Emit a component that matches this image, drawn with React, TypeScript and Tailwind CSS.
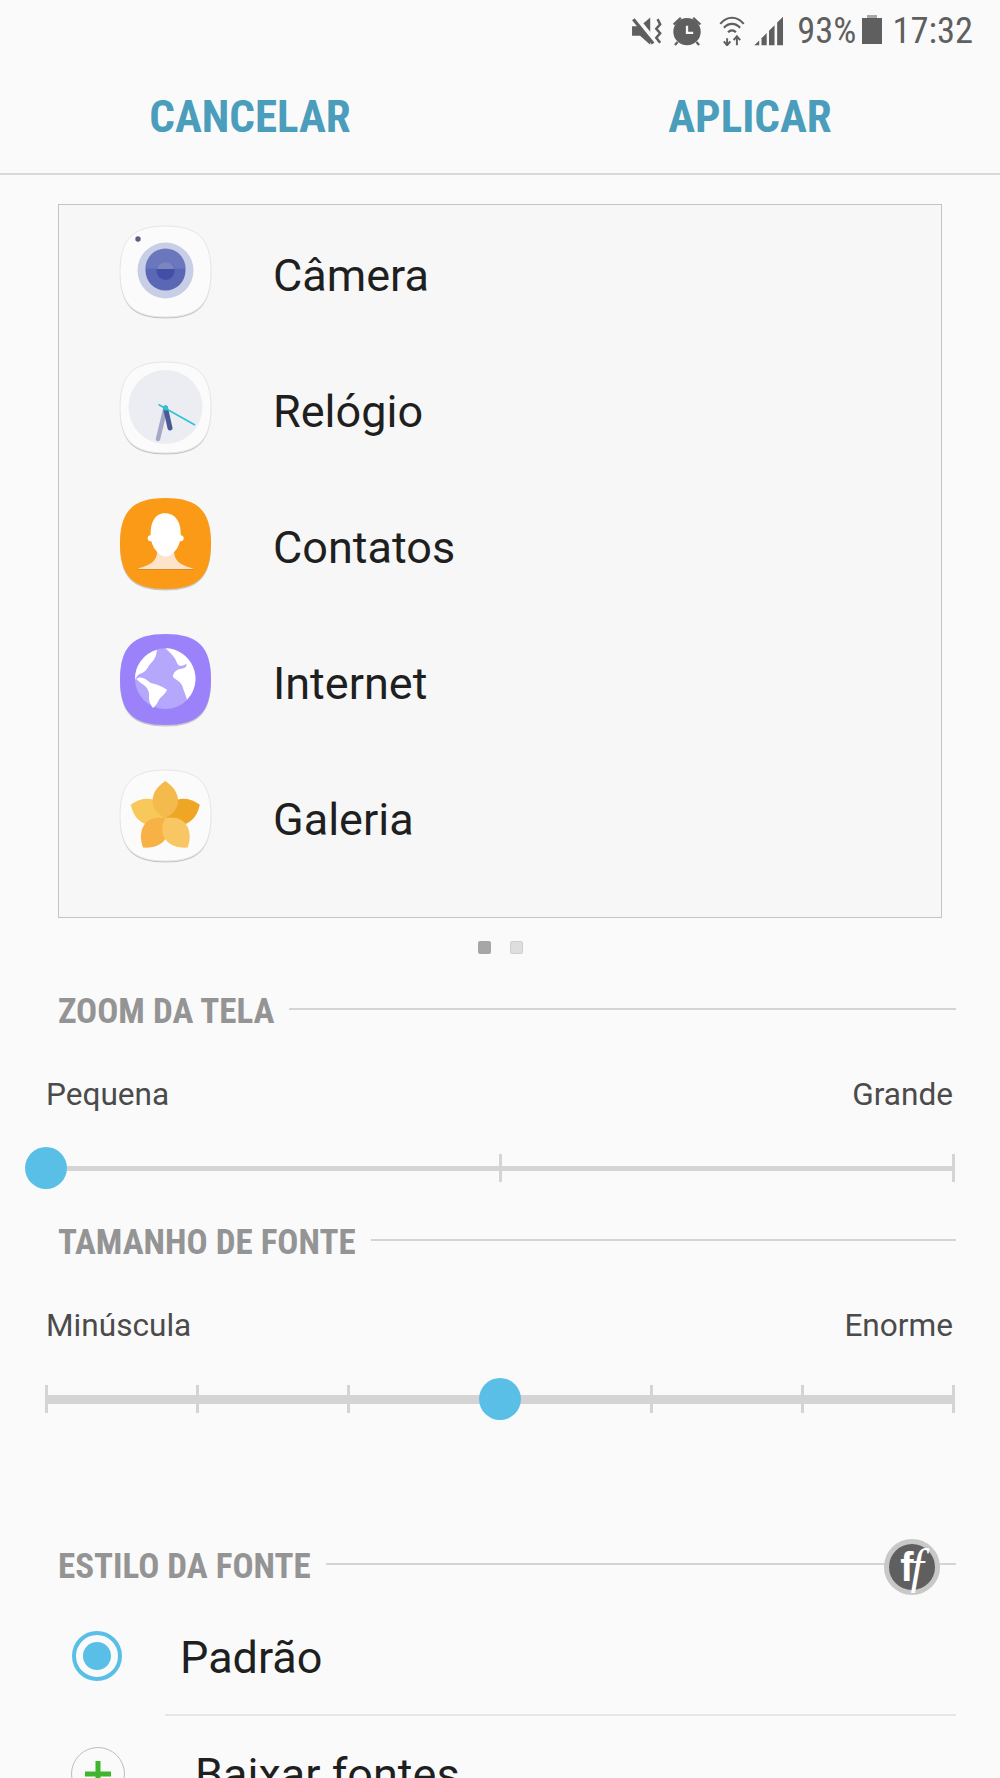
import React from "react";

const SQUIRCLE = "M46.5 1C79 1 92 14 92 46.5C92 79 79 92 46.5 92C14 92 1 79 1 46.5C1 14 14 1 46.5 1Z";

const IconBase = ({ fill, children }: { fill: string; children: React.ReactNode }) => (
  <svg width="93" height="93" viewBox="0 0 93 93" className="shrink-0 overflow-visible">
    <path d={SQUIRCLE} fill={fill === "#fbfbfb" ? "#c4c4c4" : "#00000030"} transform="translate(0 1.5)" />
    <path d={SQUIRCLE} fill={fill} stroke={fill === "#fbfbfb" ? "#e6e6e6" : "none"} />
    {children}
  </svg>
);

const CameraIcon = () => (
  <IconBase fill="#fbfbfb">
    <circle cx="19" cy="14" r="2.7" fill="#5c5c85" />
    <circle cx="46.5" cy="45.5" r="28" fill="#c8cee6" />
    <circle cx="46.5" cy="45.5" r="20" fill="#5a67b5" />
    <path d="M26.5 43.5a20 20 0 0 1 40 0Z" fill="#6a77bd" />
    <circle cx="46.5" cy="46" r="9" fill="#4150a6" />
    <path d="M37.7 44a9 9 0 0 1 17.6 0Z" fill="#7a86bd" />
  </IconBase>
);

const ClockIcon = () => (
  <IconBase fill="#fbfbfb">
    <circle cx="46.5" cy="46" r="37" fill="#ecedf3" />
    <path d="M46.5 47L39 78" stroke="#a3a8c4" strokeWidth="4.5" strokeLinecap="round" />
    <path d="M46.5 47L51 67" stroke="#4a5a94" strokeWidth="5" strokeLinecap="round" />
    <path d="M39.5 43.5L76 64" stroke="#2cc3d2" strokeWidth="1.5" />
    <circle cx="46.5" cy="47" r="2.5" fill="#2cc3d2" />
  </IconBase>
);

const ContactIcon = () => (
  <IconBase fill="#fb9a16">
    <g transform="translate(-1 -2) scale(0.3333)">
      <path d="M58 222C90 210 118 205 118 165L168 165C168 205 195 210 228 222Z" fill="#fce3c9" />
      <path d="M58 222L228 222L228 225L58 225Z" fill="#d98a22" />
      <circle cx="98" cy="130" r="9" fill="#fff" />
      <circle cx="188" cy="130" r="9" fill="#fff" />
      <path d="M140 55C175 55 190 85 188 125C186 160 160 185 143 185C126 185 100 160 98 125C96 85 110 55 140 55Z" fill="#fff" />
    </g>
  </IconBase>
);

const InternetIcon = () => (
  <IconBase fill="#9b82fb">
    <g transform="translate(0 -0.3) scale(0.3333)">
      <circle cx="107" cy="117" r="91" transform="translate(32 21)" fill="#b5a7fc" />
      <g transform="translate(32 21)" fill="#fff">
        <path d="M82 30C80 45 78 58 62 72C52 85 52 95 30 103C22 108 18 115 16 122A91 91 0 0 1 82 30Z" />
        <path d="M107 26C120 38 135 50 142 70C148 82 158 80 170 72C172 80 168 86 150 88C138 92 130 100 130 112C140 122 155 125 160 145C164 158 168 165 172 180A91 91 0 0 0 107 26Z" />
        <path d="M20 118C28 112 40 110 60 128C70 134 85 132 112 150C108 162 95 170 88 180C82 192 78 198 70 205C62 195 58 185 58 175C60 160 55 145 45 138C35 132 28 125 20 118Z" />
      </g>
    </g>
  </IconBase>
);

const Petal = ({ angle, color }: { angle: number; color: string }) => (
  <path d="M0 0C-17 -8 -17 -26 0 -37C17 -26 17 -8 0 0Z" fill={color} transform={`translate(46.3 49) rotate(${angle})`} />
);

const GalleryIcon = () => (
  <IconBase fill="#fbfbfb">
    <Petal angle={291} color="#f8c85a" />
    <Petal angle={69} color="#efa625" />
    <Petal angle={217} color="#f8b144" />
    <Petal angle={143} color="#f8c662" />
    <Petal angle={0} color="#f5ba4c" />
  </IconBase>
);

const apps = [
  { name: "Câmera", icon: <CameraIcon /> },
  { name: "Relógio", icon: <ClockIcon /> },
  { name: "Contatos", icon: <ContactIcon /> },
  { name: "Internet", icon: <InternetIcon /> },
  { name: "Galeria", icon: <GalleryIcon /> },
];

const SectionTitle = ({ title, children }: { title: string; children?: React.ReactNode }) => (
  <div className="relative ml-[58px] mr-[44px] flex h-[40px] items-center gap-[15px]">
    <span className="text-[35px] font-bold font-stretch-condensed leading-[40px] text-[#949494]">{title}</span>
    <div className="mb-[6px] h-[2px] flex-1 bg-[#d4d4d4]" />
    {children}
  </div>
);

const LabelRow = ({ left, right }: { left: string; right: string }) => (
  <div className="ml-[46px] mr-[47px] mt-[43px] flex h-[40px] items-center justify-between text-[31.6px] leading-[40px] text-[#4b4b4b]">
    <span>{left}</span>
    <span>{right}</span>
  </div>
);

const Slider = ({ ticks, thick, thumb }: { ticks: number; thick: string; thumb: string }) => (
  <div className="relative ml-[45px] mt-[32px] flex h-[42px] w-[910px] items-center justify-between">
    <div className={`absolute left-0 right-0 ${thick} bg-[#d4d4d4]`} />
    {Array.from({ length: ticks }).map((_, i) => (
      <div key={i} className="relative h-[28px] w-[3px] bg-[#d4d4d4]" />
    ))}
    <div className={`absolute h-[42px] w-[42px] rounded-full bg-[#5abfe6] ${thumb}`} />
  </div>
);

const StatusIcons = () => (
  <div className="flex items-center">
    <svg width="32" height="30" viewBox="100 40 100 94" className="mr-[8px]">
      <path d="M100 72H125L157 45V130L125 102H100Z" fill="#5f5f5f" />
      <path d="M108 42L172 120" stroke="#fafafa" strokeWidth="16" />
      <path d="M104 50L166 126" stroke="#5f5f5f" strokeWidth="10" />
      <path d="M180 50L188 66L176 80L188 94L176 108L188 124" fill="none" stroke="#5f5f5f" strokeWidth="8" />
    </svg>
    <svg width="30" height="30" viewBox="220 40 90 92" className="mr-[17px]">
      <circle cx="265" cy="88" r="42" fill="#5f5f5f" />
      <path d="M224 66L246 46M284 46L306 66M236 120L228 129M294 120L302 129" stroke="#5f5f5f" strokeWidth="7" fill="none" />
      <path d="M265 70V92H284" fill="none" stroke="#fafafa" strokeWidth="7" />
    </svg>
    <svg width="26" height="30" viewBox="358 38 78 92" className="mr-[9px]">
      <path d="M361 62C381 37 413 37 433 62" fill="none" stroke="#5f5f5f" strokeWidth="6.5" />
      <path d="M372 74C386 58 408 58 422 74" fill="none" stroke="#5f5f5f" strokeWidth="6.5" />
      <path d="M385 88C392 80 402 80 409 88" fill="none" stroke="#5f5f5f" strokeWidth="6.5" />
      <path d="M382 106V128M372 116L382 128L392 116M412 128V100M402 112L412 100L422 112" fill="none" stroke="#5f5f5f" strokeWidth="6" />
    </svg>
    <svg width="30" height="30" viewBox="465 40 90 92" className="mr-[13px]" fill="#5f5f5f">
      <path d="M465 130L480 115V130Z" />
      <path d="M487 108L503 92V130H487Z" />
      <path d="M510 85L527 68V130H510Z" />
      <path d="M535 60L553 42V130H535Z" />
    </svg>
  </div>
);

export default function App() {
  return (
    <div className="h-[1778px] w-[1000px] overflow-hidden bg-[#fafafa] font-['Roboto',sans-serif]">
      {/* status bar */}
      <div className="flex h-[60px] items-center justify-end pr-[27px] pt-[2px]">
        <StatusIcons />
        <span className="text-[36.5px] font-stretch-condensed leading-none text-[#5f5f5f]">93%</span>
        <div className="relative ml-[6px] mr-[10px] h-[26px] w-[20px] bg-[#5f5f5f]">
          <div className="absolute left-[5px] top-[-3px] h-[3px] w-[10px] bg-[#a8a8a8]" />
        </div>
        <span className="text-[36.5px] font-stretch-condensed leading-none text-[#5f5f5f]">17:32</span>
      </div>

      {/* actions */}
      <div className="flex h-[115px] items-center border-b-2 border-[#d8d8d8] text-[45px] font-bold font-stretch-condensed text-[#4a9dbb]">
        <div className="w-[500px] text-center">CANCELAR</div>
        <div className="w-[500px] text-center">APLICAR</div>
      </div>

      {/* preview */}
      <div className="ml-[58px] mt-[29px] flex h-[714px] w-[884px] flex-col gap-[43px] border border-[#c4c4c4] bg-[#f7f7f7] pl-[60px] pt-[20px]">
        {apps.map((app) => (
          <div key={app.name} className="flex h-[93px] items-center gap-[61px]">
            {app.icon}
            <span className="mt-[7px] text-[45px] leading-none text-[#1f1f1f]">{app.name}</span>
          </div>
        ))}
      </div>

      {/* pager */}
      <div className="ml-[478px] mt-[23px] flex h-[14px] gap-[19px]">
        <div className="h-[13px] w-[13px] rounded-[2px] bg-[#a6a6a6]" />
        <div className="h-[13px] w-[13px] rounded-[2px] border border-[#cfcfcf] bg-[#dedede]" />
      </div>

      <div className="mt-[37px]">
        <SectionTitle title="ZOOM DA TELA" />
        <LabelRow left="Pequena" right="Grande" />
        <Slider ticks={3} thick="h-[5px]" thumb="left-[-20px]" />
      </div>

      <div className="mt-[34px]">
        <SectionTitle title="TAMANHO DE FONTE" />
        <LabelRow left="Minúscula" right="Enorme" />
        <Slider ticks={7} thick="h-[9px]" thumb="left-[434px]" />
      </div>

      <div className="mt-[127px]">
        <SectionTitle title="ESTILO DA FONTE">
          <div className="absolute right-[16px] top-[-8px] flex h-[56px] w-[56px] items-center justify-center rounded-full border-[5px] border-[#c8c8c8] bg-[#5f5f5f] text-white">
            <span className="font-['Liberation_Sans',sans-serif] text-[40px] font-bold leading-none">f</span>
            <span className="ml-[-3px] font-['Liberation_Serif',serif] text-[48px] italic leading-none">f</span>
          </div>
        </SectionTitle>

        <div className="mt-[9px] flex h-[120px] pl-[72px]">
          <div className="mt-[35px] flex h-[50px] w-[50px] shrink-0 items-center justify-center rounded-full border-[4px] border-[#5abfe6]">
            <div className="h-[28px] w-[28px] rounded-full bg-[#5abfe6]" />
          </div>
          <div className="ml-[43px] mr-[44px] flex flex-1 items-center border-b-2 border-[#e6e6e6] pl-[15px] pt-[4px] text-[45px] leading-none text-[#1f1f1f]">
            Padrão
          </div>
        </div>

        <div className="flex h-[116px] items-center pl-[71px]">
          <div className="flex h-[54px] w-[54px] shrink-0 items-center justify-center rounded-full border border-[#bdbdbd]">
            <svg width="30" height="30" viewBox="0 0 30 30">
              <path d="M15 2V28M2 15H28" stroke="#3fb52e" strokeWidth="5" />
            </svg>
          </div>
          <span className="ml-[70px] text-[45px] leading-none text-[#1f1f1f]">Baixar fontes</span>
        </div>
      </div>
    </div>
  );
}
